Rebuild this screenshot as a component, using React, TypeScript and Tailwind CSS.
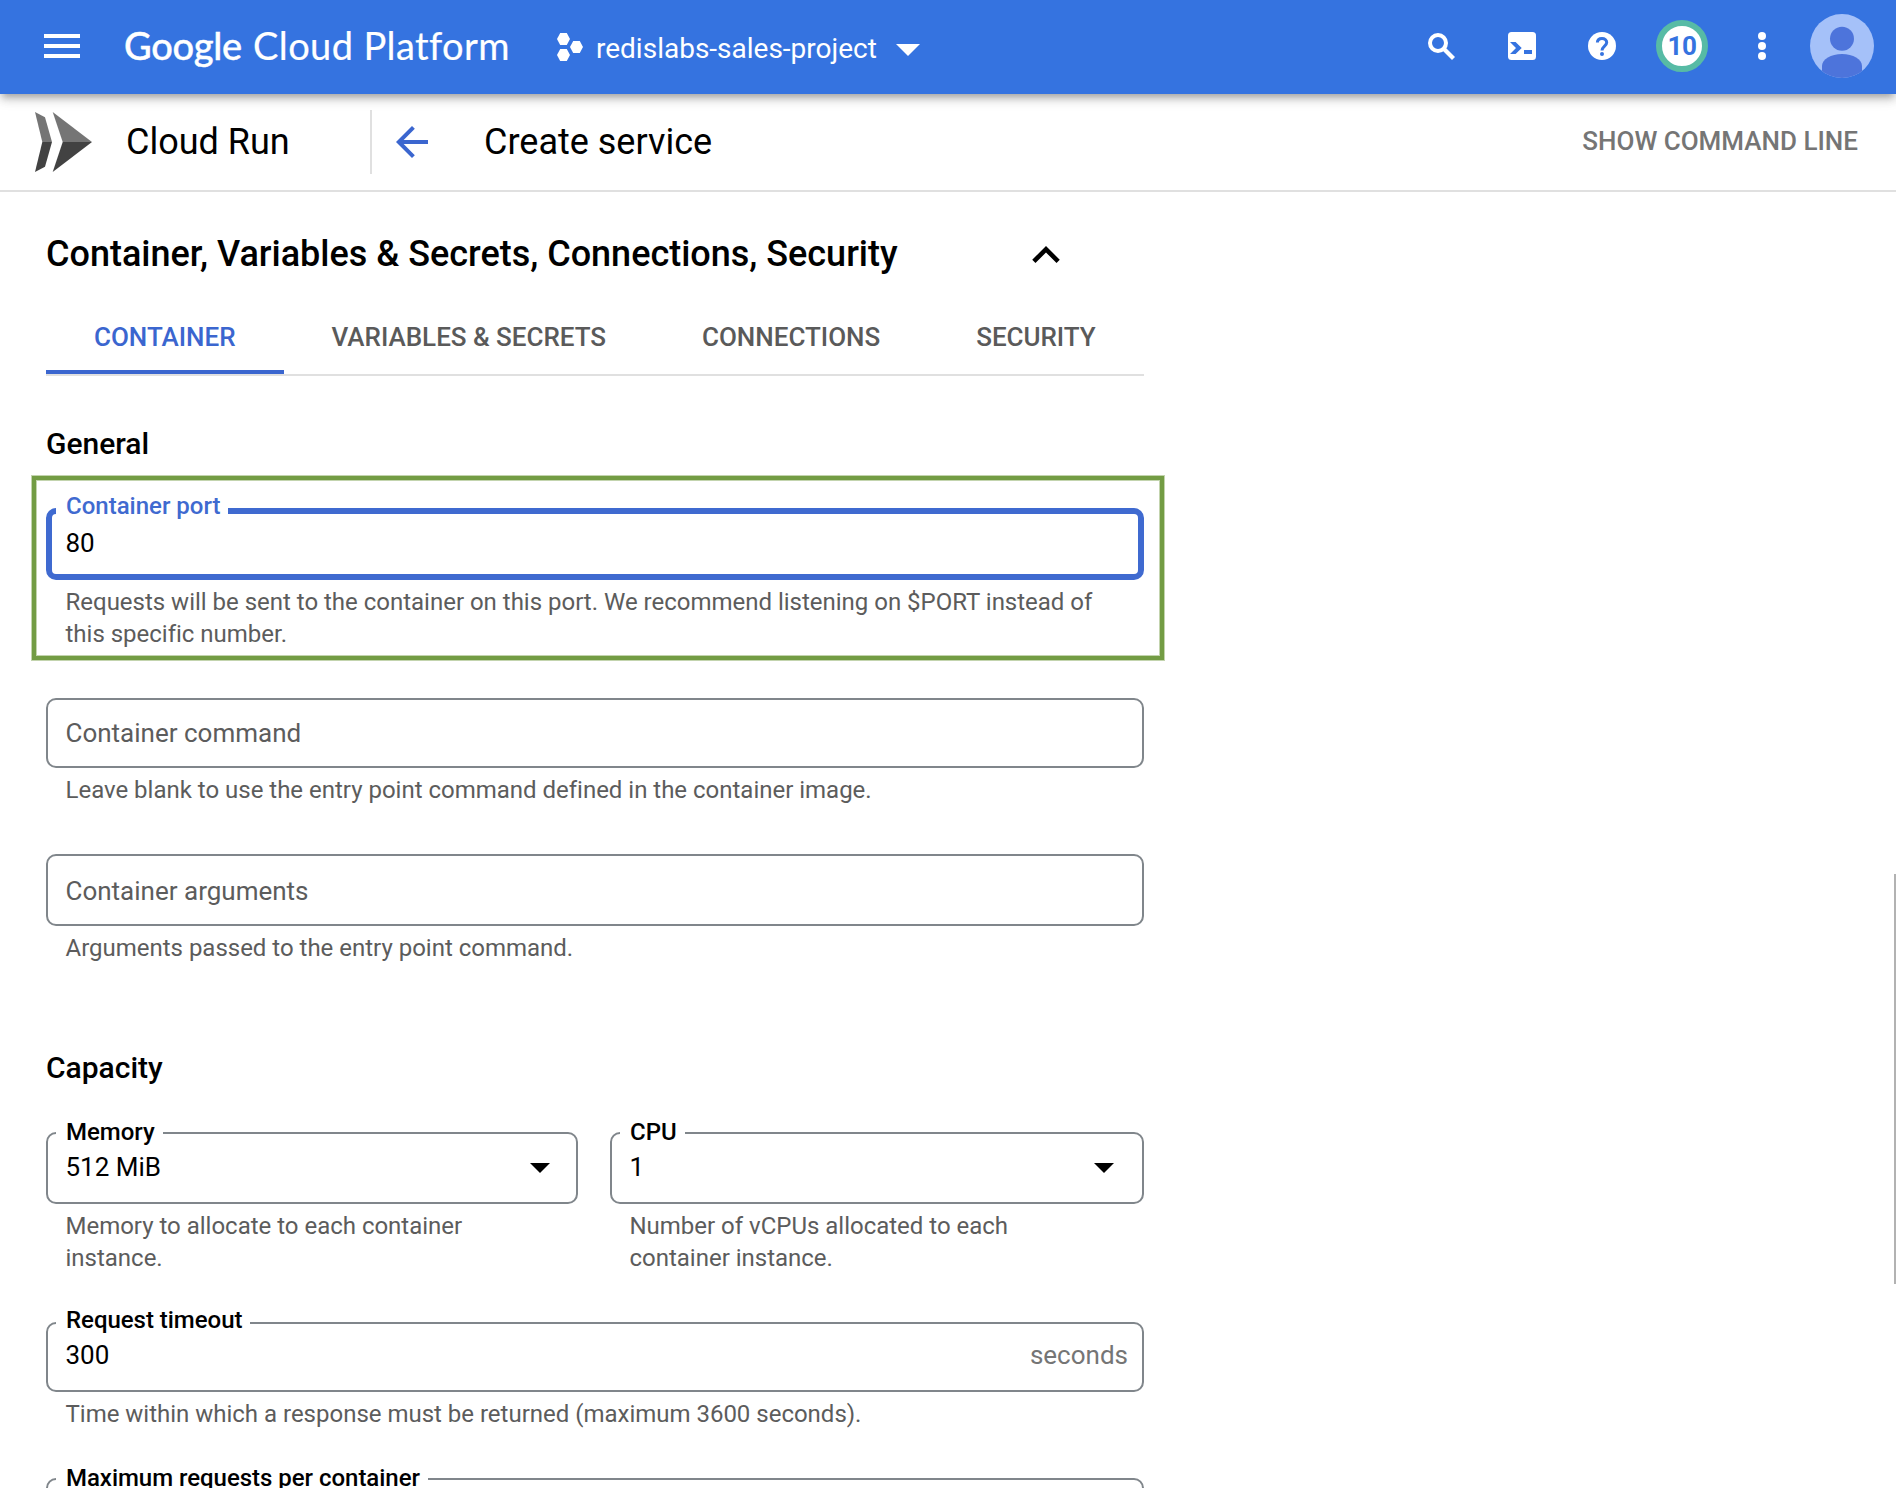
import React from "react";

function SearchIcon() {
  return (
    <svg viewBox="0 0 27 27" className="size-[27px]" fill="none" stroke="white" strokeWidth="4">
      <circle cx="10" cy="10" r="8" />
      <path d="M15 15l10.5 10.5" strokeWidth="4.2" />
    </svg>
  );
}

function ShellIcon() {
  return (
    <svg viewBox="0 0 28 28" className="size-7">
      <rect width="28" height="28" rx="3.5" fill="white" />
      <path d="M2 10h5.6l6.1 6-6.1 6H2l6-6z" fill="#3573e0" />
      <rect x="16" y="18" width="8" height="4" fill="#3573e0" />
    </svg>
  );
}

function HelpIcon() {
  return (
    <svg viewBox="0 0 28 28" className="size-7" fill="none">
      <circle cx="14" cy="14" r="14" fill="white" />
      <path
        d="M9.4 10.6C9.4 8 11.3 6.5 14 6.5s4.7 1.6 4.7 4c0 3.4-4.7 3.9-4.7 8.1"
        stroke="#3573e0"
        strokeWidth="3"
      />
      <circle cx="14" cy="22" r="2" fill="#3573e0" />
    </svg>
  );
}

function ProjectIcon() {
  return (
    <svg viewBox="0 0 26 28" className="h-7 w-[26px]" fill="white">
      <path d="M3.2 0h6.6L13 6l-3.2 6H3.2L0 6z" />
      <path d="M3.2 16h6.6L13 22l-3.2 6H3.2L0 22z" />
      <path d="M16.2 8h6.6L26 14l-3.2 6h-6.6L13 14z" />
    </svg>
  );
}

function CloudRunIcon() {
  return (
    <svg viewBox="0 0 57 60" className="h-[60px] w-[57px]">
      <path d="M0 0l10 5.3L17 30H7.3z" fill="#757575" />
      <path d="M7.3 30H17l-7 24.7L0 60z" fill="#424242" />
      <path d="M17.7 0L57 30H27.7z" fill="#757575" />
      <path d="M27.7 30H57L17.7 60z" fill="#424242" />
    </svg>
  );
}

function Avatar() {
  return (
    <svg viewBox="0 0 64 64" className="size-16">
      <defs>
        <clipPath id="avatar-disc">
          <circle cx="32" cy="32" r="32" />
        </clipPath>
      </defs>
      <g clipPath="url(#avatar-disc)">
        <rect width="64" height="64" fill="#a5c1f9" />
        <circle cx="32" cy="24.7" r="12" fill="#4d74db" />
        <path d="M12 64V52c0-7 9-12 20-12s20 5 20 12v12z" fill="#4d74db" />
      </g>
    </svg>
  );
}

function TopBar() {
  return (
    <header className="relative z-10 flex h-[94px] shrink-0 items-center bg-[#3573e0] pr-[22px] pl-11 text-white shadow-[0_6px_6px_-4px_rgba(0,0,0,0.2),0_6px_8px_0_rgba(0,0,0,0.14),0_2px_16px_0_rgba(0,0,0,0.12)]">
      <button className="-mt-0.5 flex w-9 flex-col gap-1.5" aria-label="Menu">
        <span className="h-1 bg-white" />
        <span className="h-1 bg-white" />
        <span className="h-1 bg-white" />
      </button>
      <div className="-mt-[5px] ml-11 flex w-[386px] gap-[12px] font-['Lato',sans-serif] text-[38px] leading-[46px] whitespace-nowrap [font-variant-ligatures:none]">
        <span className="w-[117px] font-medium tracking-[-0.3px] [-webkit-text-stroke:0.4px_white]">Google</span>
        <span className="tracking-[0.4px] [-webkit-text-stroke:0.2px_white]">Cloud Platform</span>
      </div>
      <button className="ml-[47px] flex items-center">
        <ProjectIcon />
        <span className="ml-[13px] w-[281px] pt-1 text-left text-[28px] leading-8 whitespace-nowrap">
          redislabs-sales-project
        </span>
        <svg viewBox="0 0 24 12" className="mt-1.5 ml-[19px] h-3 w-6" fill="white">
          <path d="M0 0h24L12 12z" />
        </svg>
      </button>
      <div className="-mt-0.5 ml-auto flex items-center">
        <SearchIcon />
        <span className="ml-[53px]">
          <ShellIcon />
        </span>
        <span className="ml-[52px]">
          <HelpIcon />
        </span>
        <span className="ml-10 flex size-[52px] items-center justify-center rounded-full border-6 border-[#57bba5] bg-white text-[26px] leading-none font-bold tracking-[-0.5px] text-[#3573e0]">
          10
        </span>
        <span className="ml-[50px] flex flex-col gap-0.5">
          <span className="size-2 rounded-full bg-white" />
          <span className="size-2 rounded-full bg-white" />
          <span className="size-2 rounded-full bg-white" />
        </span>
        <span className="ml-11">
          <Avatar />
        </span>
      </div>
    </header>
  );
}

function SubBar() {
  return (
    <div className="flex h-[98px] shrink-0 items-center border-b-2 border-[#e0e0e0] pr-[38px] pl-[35px] text-black">
      <CloudRunIcon />
      <h1 className="ml-[34px] w-[244px] text-[36px] leading-[44px]">Cloud Run</h1>
      <div className="h-16 w-0.5 bg-[#e0e0e0]" />
      <svg viewBox="4 4 16 16" className="ml-6 size-8" fill="#3b66cf">
        <path d="M20 11H7.83l5.59-5.59L12 4l-8 8 8 8 1.41-1.41L7.83 13H20v-2z" />
      </svg>
      <h2 className="ml-14 text-[36px] leading-[44px]">Create service</h2>
      <button className="mb-0.5 ml-auto text-[26px] leading-8 font-medium text-[#757575]">SHOW COMMAND LINE</button>
    </div>
  );
}

function Tab({ label, active }: { label: string; active?: boolean }) {
  return (
    <button
      className={
        "border-b-4 px-12 pt-[45px] pb-[17px] text-[26px] leading-8 font-medium tracking-[-0.02px] whitespace-nowrap " +
        (active ? "border-[#3b66cf] text-[#3b66cf]" : "border-transparent text-[#5a5a5a]")
      }
    >
      {label}
    </button>
  );
}

function Caret() {
  return (
    <svg viewBox="0 0 20 10" className="mt-3 h-2.5 w-5" fill="black">
      <path d="M0 0h20L10 10z" />
    </svg>
  );
}

function Helper({ children }: { children: React.ReactNode }) {
  return <p className="mt-1.5 pr-10 pl-[19.5px] text-2xl leading-8 tracking-[-0.01px] text-[#5c5c5c]">{children}</p>;
}

/* Outlined box; the floating label covers a stretch of the top border. */
function Box({
  label,
  labelClass = "-top-4",
  className,
  children,
}: {
  label?: string;
  labelClass?: string;
  className: string;
  children?: React.ReactNode;
}) {
  return (
    <div
      className={
        "relative flex items-start justify-between rounded-[10px] border-2 border-[#80868b] pl-[17.5px] text-[26px] leading-8 text-black " +
        className
      }
    >
      {label && (
        <span
          className={
            "absolute left-2 bg-white pr-2 pl-2.5 text-2xl leading-7 font-medium tracking-[-0.03px] whitespace-nowrap " +
            labelClass
          }
        >
          {label}
        </span>
      )}
      {children}
    </div>
  );
}

export default function App() {
  return (
    <div className="relative flex h-[1488px] w-full flex-col overflow-hidden bg-white font-['Roboto',sans-serif]">
      <TopBar />
      <SubBar />
      <main className="ml-[46px] w-[1098px] pt-10 text-black">
        <div className="flex items-center justify-between pr-[84px]">
          <h2 className="text-[36px] leading-[44px] font-medium tracking-[-0.01px] whitespace-nowrap">
            Container, Variables &amp; Secrets, Connections, Security
          </h2>
          <svg viewBox="6 8 12 7.41" className="h-[17px] w-7" fill="black">
            <path d="M12 8l-6 6 1.41 1.41L12 10.83l4.59 4.58L18 14z" />
          </svg>
        </div>
        <div className="flex border-b-2 border-[#e0e0e0]">
          <Tab label="CONTAINER" active />
          <Tab label="VARIABLES & SECRETS" />
          <Tab label="CONNECTIONS" />
          <Tab label="SECURITY" />
        </div>

        <h3 className="mt-12 text-[30px] leading-10 font-medium">General</h3>
        <section className="mt-3 -mr-5 -ml-3.5 border-4 border-[#739c44] pt-7 pr-4 pb-1.5 pl-2.5 shadow-[0_0_0_1px_#c3d4ae,inset_0_0_0_1px_#c3d4ae]">
          <div className="relative h-[72px] rounded-[10px] border-6 border-[#3f6ad0] pt-[13px] pl-[13.5px] text-[26px] leading-8">
            <span className="absolute -top-[22px] left-1 bg-white pr-[7px] pl-2.5 text-2xl leading-7 font-medium text-[#3f6ad0]">
              Container port
            </span>
            80
          </div>
          <Helper>
            Requests will be sent to the container on this port. We recommend listening on $PORT instead of this specific
            number.
          </Helper>
        </section>

        <div className="mt-[38px]">
          <Box className="h-[70px] pt-[17px] text-[#5c5c5c]!">Container command</Box>
          <Helper>Leave blank to use the entry point command defined in the container image.</Helper>
        </div>
        <div className="mt-12">
          <Box className="h-[72px] pt-[19px] text-[#5c5c5c]!">Container arguments</Box>
          <Helper>Arguments passed to the entry point command.</Helper>
        </div>

        <h3 className="mt-[84px] text-[30px] leading-10 font-medium">Capacity</h3>
        <div className="mt-11 flex gap-8">
          <div className="w-[532px]">
            <Box label="Memory" className="h-[72px] pt-[17px] pr-[26px]">
              512 MiB
              <Caret />
            </Box>
            <Helper>Memory to allocate to each container instance.</Helper>
          </div>
          <div className="w-[534px]">
            <Box label="CPU" className="h-[72px] pt-[17px] pr-[28px]">
              1
              <Caret />
            </Box>
            <Helper>Number of vCPUs allocated to each container instance.</Helper>
          </div>
        </div>
        <div className="mt-12">
          <Box label="Request timeout" labelClass="-top-[18px]" className="h-[70px] pt-[15px] pr-3.5">
            300
            <span className="text-[#757575]">seconds</span>
          </Box>
          <Helper>Time within which a response must be returned (maximum 3600 seconds).</Helper>
        </div>
        <div className="mt-12">
          <Box label="Maximum requests per container" className="h-[72px]" />
        </div>
      </main>
      <div className="absolute top-[874px] right-0 h-[410px] w-0.5 bg-[#b2b2b2]" />
    </div>
  );
}
